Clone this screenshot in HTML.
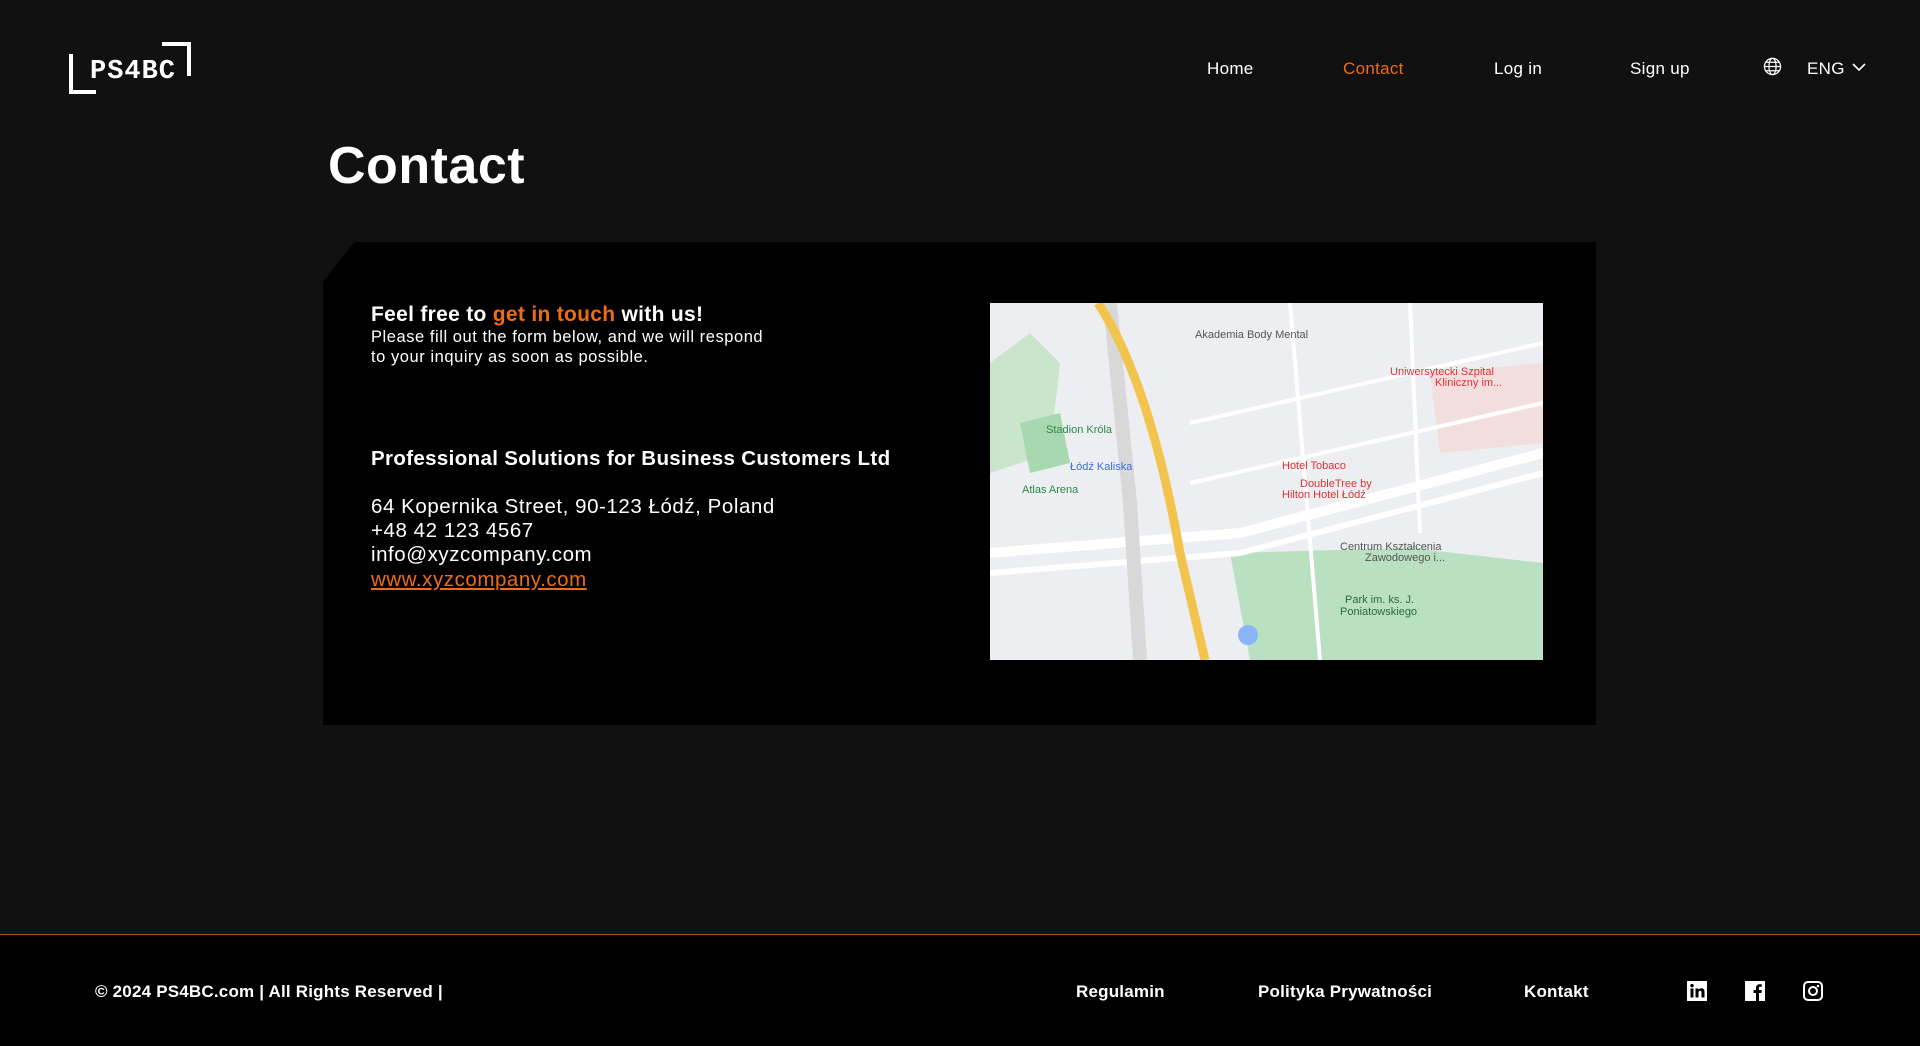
<!DOCTYPE html>
<html><head><meta charset="utf-8"><style>
*{margin:0;padding:0;box-sizing:border-box}
body{width:1920px;height:1046px;background:#111;font-family:"Liberation Sans",sans-serif;color:#fff;position:relative;overflow:hidden}
.a{position:absolute;white-space:nowrap}
.nav{font-size:17px;top:59px;letter-spacing:.3px}
.or{color:#ef6c11}
</style></head><body>
<svg class="a" style="left:68px;top:42px" width="126" height="54" viewBox="0 0 126 54">
<path d="M3 12V50H28" stroke="#fff" stroke-width="4" fill="none"/>
<path d="M94 2H121V34" stroke="#fff" stroke-width="4" fill="none"/>
<text x="22" y="36" font-family="Liberation Mono,monospace" font-size="27" font-weight="bold" fill="#fff" letter-spacing="1">PS4BC</text>
</svg>
<div class="a nav" style="left:1207px">Home</div>
<div class="a nav or" style="left:1343px">Contact</div>
<div class="a nav" style="left:1494px">Log in</div>
<div class="a nav" style="left:1630px">Sign up</div>
<svg class="a" style="left:1763px;top:57px" width="19" height="19" viewBox="0 0 20 20" fill="none" stroke="#fff" stroke-width="1.3"><circle cx="10" cy="10" r="8.5"/><ellipse cx="10" cy="10" rx="3.8" ry="8.5"/><path d="M1.5 10h17M3 5.5h14M3 14.5h14"/></svg>
<div class="a nav" style="left:1807px">ENG</div>
<svg class="a" style="left:1851px;top:62px" width="16" height="10" viewBox="0 0 16 10"><path d="M2 2l6 6 6-6" stroke="#fff" stroke-width="1.6" fill="none"/></svg>
<div class="a" style="left:328px;top:136px;font-size:52px;font-weight:bold;letter-spacing:.5px">Contact</div>
<div class="a" style="left:323px;top:242px;width:1273px;height:483px;background:#000;clip-path:polygon(31px 0,100% 0,100% 100%,0 100%,0 40px)"></div>
<div class="a" style="left:371px;top:303px;font-size:21px;font-weight:bold;letter-spacing:.3px">Feel free to <span class="or">get in touch</span> with us!</div>
<div class="a" style="left:371px;top:327px;font-size:16.5px;line-height:20px;letter-spacing:.55px">Please fill out the form below, and we will respond<br>to your inquiry as soon as possible.</div>
<div class="a" style="left:371px;top:447px;font-size:20.5px;font-weight:bold;letter-spacing:.35px">Professional Solutions for Business Customers Ltd</div>
<div class="a" style="left:371px;top:495px;font-size:20.5px;line-height:24.2px;letter-spacing:.55px">64 Kopernika Street, 90-123 Łódź, Poland<br>+48 42 123 4567<br>info@xyzcompany.com<br><span class="or" style="text-decoration:underline">www.xyzcompany.com</span></div>
<svg class="a" style="left:990px;top:303px" width="553" height="357" viewBox="0 0 553 357">
<rect width="553" height="357" fill="#eceef1"/>
<path d="M0 60L40 30L70 60L60 150L0 170Z" fill="#c9e6cd"/>
<path d="M30 120L70 110L80 160L40 170Z" fill="#a8d8b0"/>
<path d="M240 250L420 245L553 260L553 357L260 357Z" fill="#b9e0c0"/>
<path d="M440 70L553 60L553 140L450 150Z" fill="#f3dede"/>
<path d="M0 250L250 230L553 150" stroke="#fff" stroke-width="10" fill="none"/>
<path d="M0 270L250 250L553 170" stroke="#fff" stroke-width="6" fill="none"/>
<path d="M120 0L140 200L150 357" stroke="#d8d8d8" stroke-width="14" fill="none"/>
<path d="M108 0Q160 80 190 250L215 357" stroke="#f2c44e" stroke-width="9" fill="none"/>
<path d="M200 120L553 40M200 180L553 100M300 0L330 357M420 0L430 230" stroke="#fff" stroke-width="4" fill="none"/>
<circle cx="258" cy="332" r="10" fill="#8ab4f8"/>
<g font-family="Liberation Sans,sans-serif" font-size="11">
<text x="205" y="35" fill="#555">Akademia Body Mental</text>
<text x="400" y="72" fill="#d33">Uniwersytecki Szpital</text>
<text x="445" y="83" fill="#d33">Kliniczny im...</text>
<text x="56" y="130" fill="#2a8a4a">Stadion Króla</text>
<text x="80" y="167" fill="#3c6fd9">Łódź Kaliska</text>
<text x="32" y="190" fill="#2a8a4a">Atlas Arena</text>
<text x="292" y="166" fill="#d33">Hotel Tobaco</text>
<text x="310" y="184" fill="#d33">DoubleTree by</text>
<text x="292" y="195" fill="#d33">Hilton Hotel Łódź</text>
<text x="350" y="247" fill="#555">Centrum Kształcenia</text>
<text x="375" y="258" fill="#555">Zawodowego i...</text>
<text x="355" y="300" fill="#2a6a3a">Park im. ks. J.</text>
<text x="350" y="312" fill="#2a6a3a">Poniatowskiego</text>
</g>
</svg>
<div class="a" style="left:0;top:934px;width:1920px;height:112px;background:#000;border-top:1px solid #a4532a"></div>
<div class="a" style="left:95px;top:982px;font-size:17px;font-weight:bold;letter-spacing:.2px">© 2024 PS4BC.com | All Rights Reserved |</div>
<div class="a" style="left:1076px;top:982px;font-size:17px;font-weight:bold;letter-spacing:.2px">Regulamin</div>
<div class="a" style="left:1258px;top:982px;font-size:17px;font-weight:bold;letter-spacing:.2px">Polityka Prywatności</div>
<div class="a" style="left:1524px;top:982px;font-size:17px;font-weight:bold;letter-spacing:.2px">Kontakt</div>
<svg class="a" style="left:1687px;top:981px" width="20" height="20" viewBox="0 0 20 20"><rect width="20" height="20" fill="#fff"/><rect x="3.5" y="7.5" width="3" height="9" fill="#000"/><circle cx="5" cy="4.6" r="1.7" fill="#000"/><path d="M8.5 7.5h3v1.4c.7-1.1 1.8-1.6 3-1.6 2 0 3 1.3 3 3.7v5.5h-3v-5c0-1.1-.4-1.7-1.3-1.7-1 0-1.7.7-1.7 1.9v4.8h-3z" fill="#000"/></svg>
<svg class="a" style="left:1745px;top:981px" width="20" height="20" viewBox="0 0 20 20"><rect width="20" height="20" fill="#fff"/><path d="M11 20v-8h-2.5v-3h2.5V7c0-2.5 1.5-3.8 3.7-3.8 1 0 1.9.1 2.1.1v2.5h-1.5c-1.2 0-1.4.6-1.4 1.4V9h2.9l-.4 3H14v8z" fill="#000"/></svg>
<svg class="a" style="left:1803px;top:981px" width="20" height="20" viewBox="0 0 20 20" fill="none" stroke="#fff"><rect x="1" y="1" width="18" height="18" rx="4" stroke-width="2"/><circle cx="10" cy="10" r="4" stroke-width="2"/><circle cx="15" cy="5" r=".8" fill="#fff"/></svg>
</body></html>
